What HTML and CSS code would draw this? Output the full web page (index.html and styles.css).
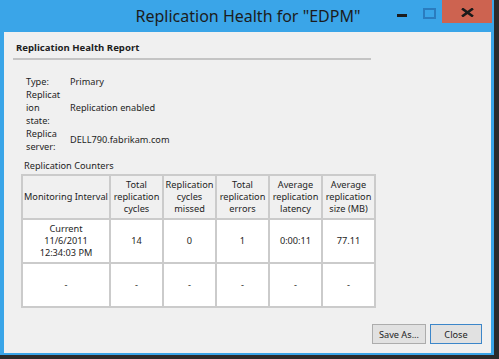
FILE: index.html
```html
<!DOCTYPE html>
<html lang="en">
<head>
    <meta charset="UTF-8">
    <title>Replication Health for "EDPM"</title>
    <link rel="stylesheet" href="styles.css">
</head>
<body>
    <div class="window">
        <div class="titlebar">
            <div></div>
            <div class="title">Replication Health for "EDPM"</div>
            <div class="controls">
                <span class="minimize"></span>
                <span class="maximize"></span>
                <span class="close-btn">
                    <svg width="13" height="9" viewBox="0 0 13 9">
                        <path d="M1 0.5 L12 8.5 M12 0.5 L1 8.5" stroke="#1a1a1a" stroke-width="2.6"/>
                    </svg>
                </span>
            </div>
        </div>
        <div class="content">
            <div class="report">
                <div class="report-title">Replication Health Report</div>
                <div class="fields">
                    <div class="row">
                        <div class="label">Type:</div>
                        <div class="value">Primary</div>
                    </div>
                    <div class="row">
                        <div class="label">Replication state:</div>
                        <div class="value">Replication enabled</div>
                    </div>
                    <div class="row clipped">
                        <div class="label">Replica server:</div>
                        <div class="value">DELL790.fabrikam.com</div>
                    </div>
                </div>
                <div class="counters-title">Replication Counters</div>
                <table class="counters">
                    <colgroup>
                        <col class="wide">
                        <col><col><col><col><col>
                    </colgroup>
                    <tr class="head">
                        <th>Monitoring Interval</th>
                        <th>Total replication cycles</th>
                        <th>Replication cycles missed</th>
                        <th>Total replication errors</th>
                        <th>Average replication latency</th>
                        <th>Average replication size (MB)</th>
                    </tr>
                    <tr>
                        <td>Current<br>11/6/2011<br>12:34:03 PM</td>
                        <td>14</td>
                        <td>0</td>
                        <td>1</td>
                        <td>0:00:11</td>
                        <td>77.11</td>
                    </tr>
                    <tr>
                        <td>-</td>
                        <td>-</td>
                        <td>-</td>
                        <td>-</td>
                        <td>-</td>
                        <td>-</td>
                    </tr>
                </table>
            </div>
            <div class="buttons">
                <button>Save As...</button>
                <button class="default">Close</button>
            </div>
        </div>
    </div>
</body>
</html>
```

FILE: styles.css
```css
html, body {
    margin: 0;
    padding: 0;
    width: 499px;
    height: 359px;
    overflow: hidden;
    background-color: #2b2b2b;
    font-family: "Noto Sans", "Open Sans", sans-serif;
    font-size: 9.2px;
    color: #1e1e1e;
}
.window {
    width: 494px;
    height: 355px;
    background-color: #3aa5e8;
    padding: 0 3px 2px 4px;
    box-sizing: border-box;
    display: flex;
    flex-direction: column;
}
.titlebar {
    height: 32px;
    flex-shrink: 0;
    display: grid;
    grid-template-columns: 1fr auto 1fr;
    margin-right: -1px;
}
.title {
    font-size: 16px;
    line-height: 17px;
    padding-top: 8px;
    color: #1c1c1c;
    white-space: nowrap;
}
.controls {
    display: flex;
    justify-content: flex-end;
    align-items: flex-start;
}
.minimize {
    width: 10px;
    height: 3px;
    background-color: #1c1c1c;
    margin-top: 14px;
    margin-right: 16px;
}
.maximize {
    width: 9px;
    height: 7px;
    border: 2px solid #2a7cbf;
    margin-top: 8px;
    margin-right: 6px;
}
.close-btn {
    width: 50px;
    height: 23px;
    background-color: #cd6350;
    display: flex;
    justify-content: center;
    align-items: center;
    padding-top: 1px;
    box-sizing: border-box;
}
.content {
    flex: 1;
    background-color: #f0f0f0;
    display: flex;
    flex-direction: column;
    padding: 8px 9px 0 9px;
}
.report {
    flex: 1;
}
.report-title {
    font-weight: bold;
    font-size: 9.6px;
    line-height: 16px;
    padding: 0 3px 2px;
    width: 352px;
    border-bottom: 2px solid #c4c4c4;
}
.fields {
    margin-top: 15px;
    padding-left: 13px;
}
.row {
    display: flex;
    align-items: center;
    line-height: 13px;
}
.row.clipped {
    height: 23px;
    overflow: hidden;
    align-items: flex-start;
}
.row.clipped .value {
    margin-top: 6px;
}
.label {
    width: 36px;
    margin-right: 8px;
    overflow-wrap: anywhere;
}
.counters-title {
    margin-top: 9px;
    padding-left: 11px;
    line-height: 13px;
}
.counters {
    margin-top: 2px;
    margin-left: 8px;
    width: 353px;
    table-layout: fixed;
    border-collapse: collapse;
    background-color: #fff;
}
.counters col {
    width: 53px;
}
.counters col.wide {
    width: 88px;
}
.counters th,
.counters td {
    border: 2px solid #cbcbcb;
    text-align: center;
    font-weight: normal;
    line-height: 12px;
    padding: 0 1px;
    height: 42px;
}
.counters th {
    background-color: #f0f0f0;
}
.buttons {
    display: flex;
    justify-content: flex-end;
    padding: 0 0 9px;
}
button {
    font-family: inherit;
    font-size: 9.2px;
    color: #1e1e1e;
    background-color: #e1e1e1;
    border: 1px solid #acacac;
    width: 54px;
    height: 20px;
    padding: 0;
    margin-left: 4px;
}
button.default {
    width: 52px;
    border-color: #3c86c9;
}
```
